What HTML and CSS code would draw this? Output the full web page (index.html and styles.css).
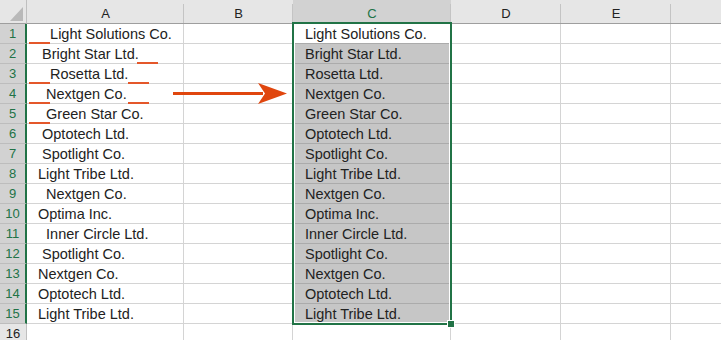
FILE: index.html
```html
<!DOCTYPE html>
<html lang="en">
<head>
<meta charset="utf-8">
<title>Trim spaces</title>
<link rel="stylesheet" href="styles.css">
</head>
<body>
<div class="sheet">
  <div class="grid">
    <div class="corner"><span class="tri"></span></div>
    <div class="colhdr">A</div>
    <div class="colhdr">B</div>
    <div class="colhdr sel">C</div>
    <div class="colhdr">D</div>
    <div class="colhdr">E</div>
    <div class="colhdr last"></div>

    <div class="rowhdr sel">1</div><div class="cell">   Light Solutions Co.</div><div class="cell"></div><div class="cell c">Light Solutions Co.</div><div class="cell"></div><div class="cell"></div><div class="cell last"></div>
    <div class="rowhdr sel">2</div><div class="cell"> Bright Star Ltd.  </div><div class="cell"></div><div class="cell c fill">Bright Star Ltd.</div><div class="cell"></div><div class="cell"></div><div class="cell last"></div>
    <div class="rowhdr sel">3</div><div class="cell">   Rosetta Ltd.  </div><div class="cell"></div><div class="cell c fill">Rosetta Ltd.</div><div class="cell"></div><div class="cell"></div><div class="cell last"></div>
    <div class="rowhdr sel">4</div><div class="cell">  Nextgen Co.  </div><div class="cell"></div><div class="cell c fill">Nextgen Co.</div><div class="cell"></div><div class="cell"></div><div class="cell last"></div>
    <div class="rowhdr sel">5</div><div class="cell">  Green Star Co.</div><div class="cell"></div><div class="cell c fill">Green Star Co.</div><div class="cell"></div><div class="cell"></div><div class="cell last"></div>
    <div class="rowhdr sel">6</div><div class="cell"> Optotech Ltd.</div><div class="cell"></div><div class="cell c fill">Optotech Ltd.</div><div class="cell"></div><div class="cell"></div><div class="cell last"></div>
    <div class="rowhdr sel">7</div><div class="cell"> Spotlight Co.</div><div class="cell"></div><div class="cell c fill">Spotlight Co.</div><div class="cell"></div><div class="cell"></div><div class="cell last"></div>
    <div class="rowhdr sel">8</div><div class="cell">Light Tribe Ltd.</div><div class="cell"></div><div class="cell c fill">Light Tribe Ltd.</div><div class="cell"></div><div class="cell"></div><div class="cell last"></div>
    <div class="rowhdr sel">9</div><div class="cell">  Nextgen Co.</div><div class="cell"></div><div class="cell c fill">Nextgen Co.</div><div class="cell"></div><div class="cell"></div><div class="cell last"></div>
    <div class="rowhdr sel">10</div><div class="cell">Optima Inc.</div><div class="cell"></div><div class="cell c fill">Optima Inc.</div><div class="cell"></div><div class="cell"></div><div class="cell last"></div>
    <div class="rowhdr sel">11</div><div class="cell">  Inner Circle Ltd.</div><div class="cell"></div><div class="cell c fill">Inner Circle Ltd.</div><div class="cell"></div><div class="cell"></div><div class="cell last"></div>
    <div class="rowhdr sel">12</div><div class="cell"> Spotlight Co.</div><div class="cell"></div><div class="cell c fill">Spotlight Co.</div><div class="cell"></div><div class="cell"></div><div class="cell last"></div>
    <div class="rowhdr sel">13</div><div class="cell">Nextgen Co.</div><div class="cell"></div><div class="cell c fill">Nextgen Co.</div><div class="cell"></div><div class="cell"></div><div class="cell last"></div>
    <div class="rowhdr sel">14</div><div class="cell">Optotech Ltd.</div><div class="cell"></div><div class="cell c fill">Optotech Ltd.</div><div class="cell"></div><div class="cell"></div><div class="cell last"></div>
    <div class="rowhdr sel">15</div><div class="cell">Light Tribe Ltd.</div><div class="cell"></div><div class="cell c fill">Light Tribe Ltd.</div><div class="cell"></div><div class="cell"></div><div class="cell last"></div>
    <div class="rowhdr">16</div><div class="cell"></div><div class="cell"></div><div class="cell"></div><div class="cell"></div><div class="cell"></div><div class="cell last"></div>
  </div>

  <!-- selected range C1:C15 with its fill handle -->
  <div class="selection"><span class="handle"></span></div>

  <!-- annotation layer: space markers and the arrow -->
  <svg class="ink" width="721" height="340" viewBox="0 0 721 340" aria-hidden="true">
    <g class="space-marks">
      <rect x="29" y="42" width="21" height="2"/>
      <rect x="137" y="62" width="21" height="2"/>
      <rect x="29" y="82" width="21" height="2"/>
      <rect x="128" y="82" width="21" height="2"/>
      <rect x="29" y="102" width="21" height="2"/>
      <rect x="128" y="102" width="21" height="2"/>
      <rect x="29" y="122" width="21" height="2"/>
    </g>
    <g class="arrow">
      <rect x="173" y="92" width="90" height="3"/>
      <polygon points="258,83 287,93.5 258,104 265,93.5"/>
    </g>
  </svg>
</div>
</body>
</html>
```

FILE: styles.css
```css
html, body {
  margin: 0;
  padding: 0;
  background: #fff;
}

body {
  font-family: "Liberation Sans", Arial, sans-serif;
  color: #222;
  overflow: hidden;
}

.sheet {
  position: relative;
  width: 721px;
  height: 340px;
  overflow: hidden;
}

.grid {
  display: grid;
  grid-template-columns: 27px 157px 109px 158px 110px 110px 1fr;
  grid-template-rows: 24px repeat(16, 20px);
}

.grid > div {
  box-sizing: border-box;
}

/* top-left select-all corner */
.corner {
  background: #e6e6e6;
  border-right: 1px solid #bfbfbf;
  border-bottom: 1px solid #9e9e9e;
  display: flex;
  justify-content: flex-end;
  align-items: flex-end;
  padding: 0 3px 2px 0;
}

.tri {
  width: 13px;
  height: 14px;
  background: #b9b9b9;
  clip-path: polygon(100% 0, 100% 100%, 0 100%);
}

/* column headers */
.colhdr {
  background:
    linear-gradient(#c4c4c4, #c4c4c4) right 4px / 1px calc(100% - 4px) no-repeat,
    #e6e6e6;
  border-bottom: 1px solid #9e9e9e;
  padding-top: 5px;
  font-size: 13px;
  line-height: 18px;
  text-align: center;
  color: #222;
}

.colhdr.sel {
  background-color: #d2d2d2;
  color: #217346;
}

.colhdr.last {
  background: #e6e6e6;
}

/* row headers */
.rowhdr {
  background: #e6e6e6;
  border-right: 1px solid #bfbfbf;
  border-bottom: 1px solid #c8c8c8;
  padding-top: 1px;
  font-size: 13px;
  line-height: 18px;
  text-align: center;
  color: #222;
}

.rowhdr.sel {
  background: #d2d2d2;
  border-right: 2px solid #217346;
  border-bottom-color: #bdbdbd;
  color: #217346;
}

/* worksheet cells */
.cell {
  border-right: 1px solid #d4d4d4;
  border-bottom: 1px solid #d4d4d4;
  padding-left: 11px;
  padding-top: 1px;
  font-size: 14.5px;
  line-height: 18px;
  white-space: pre;
  overflow: hidden;
  color: #222;
}

.cell.last {
  border-right: none;
}

.cell.c {
  padding-left: 12px;
  border-bottom-color: #ababab;
}

.cell.fill {
  background: #c6c6c6;
}

/* selection outline */
.selection {
  position: absolute;
  left: 292px;
  top: 22px;
  width: 160px;
  height: 303px;
  box-sizing: border-box;
  border: 2px solid #217346;
  box-shadow: inset 0 0 0 1px #fff;
  pointer-events: none;
}

.handle {
  position: absolute;
  right: -4px;
  bottom: -4px;
  width: 6px;
  height: 6px;
  background: #217346;
  box-shadow: 0 0 0 1px #fff;
}

/* annotation layer */
.ink {
  position: absolute;
  left: 0;
  top: 0;
  pointer-events: none;
}

.space-marks rect {
  fill: #e4572a;
}

.arrow rect,
.arrow polygon {
  fill: #e0460e;
}
```
